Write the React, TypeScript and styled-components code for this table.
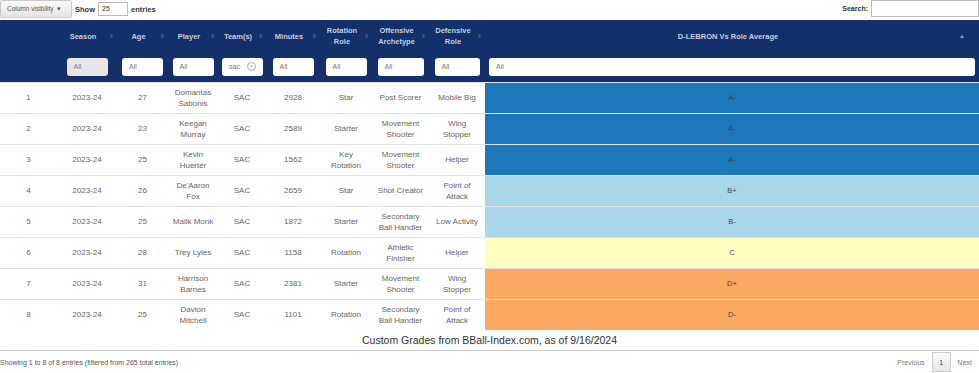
import React from "react";
import styled, { createGlobalStyle } from "styled-components";

const GlobalStyle = createGlobalStyle`
  html, body {
    margin: 0;
    padding: 0;
    background: #fff;
    font-family: "Liberation Sans", Arial, sans-serif;
  }
`;

const Page = styled.div`
  width: 979px;
  height: 373px;
  overflow: hidden;
  display: flex;
  flex-direction: column;
`;

const TopBar = styled.div`
  height: 20px;
  display: flex;
  align-items: flex-start;
  justify-content: space-between;
`;

const TopLeft = styled.div`
  display: flex;
  align-items: center;
  gap: 3px;
  font-size: 7.5px;
  color: #333;
  font-weight: bold;
`;

const VisButton = styled.button`
  width: 72px;
  height: 18px;
  padding: 0 6px;
  margin: 0;
  border: 1px solid #c9c9c9;
  border-radius: 2px;
  background: linear-gradient(#fafafa, #e4e4e4);
  font-family: inherit;
  font-size: 6.5px;
  color: #555;
  text-align: left;
`;

const SmallInput = styled.div<{ $w: number; $h?: number }>`
  width: ${(p) => p.$w}px;
  height: ${(p) => p.$h ?? 14}px;
  border: 1px solid #bbb;
  box-sizing: border-box;
  background: #fff;
  font-size: 7px;
  font-weight: normal;
  color: #333;
  padding: 2px 3px;
`;

const SearchWrap = styled.div`
  display: flex;
  align-items: center;
  gap: 3px;
  font-size: 7px;
  font-weight: bold;
  color: #333;
`;

const Table = styled.table`
  border-collapse: collapse;
  table-layout: fixed;
  width: 979px;
`;

const HeadRow = styled.tr`
  background: #13306a;
  height: 32px;
`;

const FilterRow = styled.tr`
  background: #13306a;
  height: 30px;
`;

const Th = styled.th`
  padding: 0 9px 0 1px;
  font-size: 7.5px;
  line-height: 11px;
  font-weight: bold;
  color: #c4cde2;
  text-align: center;
  vertical-align: middle;
  white-space: pre-line;
  position: relative;
`;

const SortMark = styled.span<{ $active?: boolean }>`
  position: absolute;
  right: ${(p) => (p.$active ? 14 : 3)}px;
  top: 50%;
  transform: translateY(-50%);
  font-size: 6px;
  color: ${(p) => (p.$active ? "#8fa0c6" : "#3d5388")};
`;

const FilterCell = styled.td`
  padding: 0 4px;
  vertical-align: middle;
`;

const FilterBox = styled.div<{ $w?: number; $disabled?: boolean }>`
  width: ${(p) => (p.$w ? `${p.$w}px` : "auto")};
  margin: 0 auto;
  height: 18px;
  border-radius: 3px;
  background: ${(p) => (p.$disabled ? "#e6e6e6" : "#fff")};
  font-size: 7px;
  color: #777;
  padding: 0 7px;
  box-sizing: border-box;
  display: flex;
  align-items: center;
  justify-content: space-between;
`;

const ClearIcon = styled.span`
  width: 7px;
  height: 7px;
  border: 1px solid #aaa;
  border-radius: 50%;
  color: #999;
  font-size: 5px;
  line-height: 7px;
  text-align: center;
`;

const BodyRow = styled.tr`
  height: 31px;
  border-top: 1px solid #e2e2e2;
`;

const Td = styled.td`
  padding: 0 1px;
  font-size: 8px;
  line-height: 11px;
  color: #666;
  text-align: center;
  vertical-align: middle;
  white-space: pre-line;
`;

const GradeCell = styled.td<{ $bg: string }>`
  background: ${(p) => p.$bg};
  font-size: 7.5px;
  color: #444;
  text-align: center;
  vertical-align: middle;
`;

const Caption = styled.div`
  height: 20px;
  border-bottom: 1px solid #ccc;
  text-align: center;
  font-size: 10.5px;
  line-height: 20px;
  color: #333;
`;

const Footer = styled.div`
  flex: 1;
  display: flex;
  align-items: center;
  justify-content: space-between;
  font-size: 7px;
  color: #555;
`;

const Pager = styled.div`
  display: flex;
  align-items: center;
  gap: 7px;
  padding-right: 7px;
  color: #777;
`;

const PageBtn = styled.span`
  width: 19px;
  height: 20px;
  border: 1px solid #ccc;
  box-sizing: border-box;
  background: linear-gradient(#fafafa, #e6e6e6);
  display: flex;
  align-items: center;
  justify-content: center;
  color: #444;
`;

const widths = [57, 60, 51, 50, 48, 54, 52, 57, 56];
const filterWidths = [41, 41, 41, 41, 41, 41, 46, 45];

const headers = [
  "",
  "Season",
  "Age",
  "Player",
  "Team(s)",
  "Minutes",
  "Rotation\nRole",
  "Offensive\nArchetype",
  "Defensive\nRole",
];

const gradeColors: Record<string, string> = {
  "A-": "#1c77bb",
  "B+": "#a9d6e8",
  "B-": "#a9d6e8",
  C: "#fefec0",
  "D+": "#fba960",
  "D-": "#fba960",
};

type Row = [string, string, string, string, string, string, string, string, string, string];

// line breaks follow the wrapping of the original table
const rows: Row[] = [
  ["1", "2023-24", "27", "Domantas\nSabonis", "SAC", "2928", "Star", "Post Scorer", "Mobile Big", "A-"],
  ["2", "2023-24", "23", "Keegan\nMurray", "SAC", "2589", "Starter", "Movement\nShooter", "Wing\nStopper", "A-"],
  ["3", "2023-24", "25", "Kevin\nHuerter", "SAC", "1562", "Key\nRotation", "Movement\nShooter", "Helper", "A-"],
  ["4", "2023-24", "26", "De'Aaron\nFox", "SAC", "2659", "Star", "Shot Creator", "Point of\nAttack", "B+"],
  ["5", "2023-24", "25", "Malik Monk", "SAC", "1872", "Starter", "Secondary\nBall Handler", "Low Activity", "B-"],
  ["6", "2023-24", "28", "Trey Lyles", "SAC", "1158", "Rotation", "Athletic\nFinisher", "Helper", "C"],
  ["7", "2023-24", "31", "Harrison\nBarnes", "SAC", "2381", "Starter", "Movement\nShooter", "Wing\nStopper", "D+"],
  ["8", "2023-24", "25", "Davion\nMitchell", "SAC", "1101", "Rotation", "Secondary\nBall Handler", "Point of\nAttack", "D-"],
];

const App = () => {
  return (
    <>
      <GlobalStyle />
      <Page>
        <TopBar>
          <TopLeft>
            <VisButton>Column visibility &nbsp;▾</VisButton>
            <span>Show</span>
            <SmallInput $w={30}>25</SmallInput>
            <span>entries</span>
          </TopLeft>
          <SearchWrap>
            <span>Search:</span>
            <SmallInput $w={108} $h={17} />
          </SearchWrap>
        </TopBar>

        <Table>
          <colgroup>
            {widths.map((w, i) => (
              <col key={i} style={{ width: w }} />
            ))}
            <col />
          </colgroup>
          <thead>
            <HeadRow>
              {headers.map((h, i) => (
                <Th key={i}>
                  {h}
                  {h && <SortMark>⬍</SortMark>}
                </Th>
              ))}
              <Th>
                D-LEBRON Vs Role Average
                <SortMark $active>▲</SortMark>
              </Th>
            </HeadRow>
            <FilterRow>
              <td />
              {filterWidths.map((w, i) => (
                <FilterCell key={i}>
                  {i === 3 ? (
                    <FilterBox $w={w}>
                      sac <ClearIcon>×</ClearIcon>
                    </FilterBox>
                  ) : (
                    <FilterBox $w={w} $disabled={i === 0}>
                      All
                    </FilterBox>
                  )}
                </FilterCell>
              ))}
              <FilterCell>
                <FilterBox>All</FilterBox>
              </FilterCell>
            </FilterRow>
          </thead>
          <tbody>
            {rows.map((r) => (
              <BodyRow key={r[0]}>
                {r.slice(0, 9).map((c, i) => (
                  <Td key={i}>{c}</Td>
                ))}
                <GradeCell $bg={gradeColors[r[9]]}>{r[9]}</GradeCell>
              </BodyRow>
            ))}
          </tbody>
        </Table>

        <Caption>Custom Grades from BBall-Index.com, as of 9/16/2024</Caption>

        <Footer>
          <span>Showing 1 to 8 of 8 entries (filtered from 265 total entries)</span>
          <Pager>
            <span>Previous</span>
            <PageBtn>1</PageBtn>
            <span>Next</span>
          </Pager>
        </Footer>
      </Page>
    </>
  );
};

export default App;
